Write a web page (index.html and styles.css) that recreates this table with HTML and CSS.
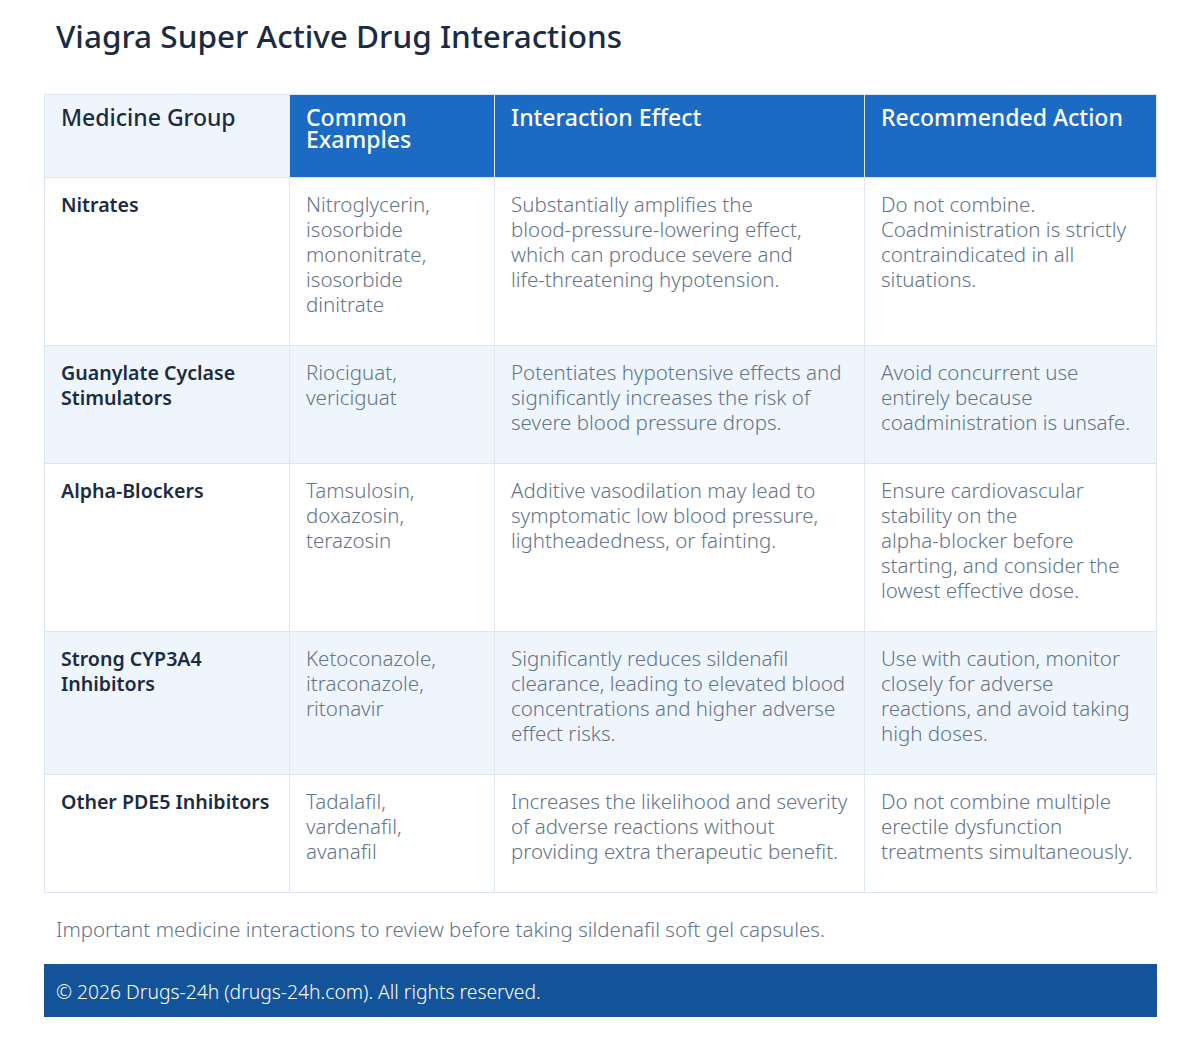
FILE: index.html
```html
<!DOCTYPE html>
<html lang="en">
<head>
<meta charset="utf-8">
<title>Viagra Super Active Drug Interactions</title>
<link rel="stylesheet" href="styles.css">
</head>
<body>
<main class="page">
  <h1 class="title">Viagra Super Active Drug Interactions</h1>
  <table class="grid">
    <colgroup>
      <col class="c1"><col class="c2"><col class="c3"><col class="c4">
    </colgroup>
    <thead>
      <tr>
        <th class="th-light">Medicine Group</th>
        <th>Common Examples</th>
        <th>Interaction Effect</th>
        <th>Recommended Action</th>
      </tr>
    </thead>
    <tbody>
      <tr>
        <td class="grp">Nitrates</td>
        <td class="ex">Nitroglycerin, isosorbide mononitrate, isosorbide dinitrate</td>
        <td>Substantially amplifies the <span class="nw">blood-pressure-lowering</span> effect, which can produce severe and <span class="nw">life-threatening</span> hypotension.</td>
        <td>Do not combine. Coadministration is strictly contraindicated in all situations.</td>
      </tr>
      <tr class="alt">
        <td class="grp">Guanylate Cyclase Stimulators</td>
        <td class="ex">Riociguat, vericiguat</td>
        <td>Potentiates hypotensive effects and significantly increases the risk of severe blood pressure drops.</td>
        <td>Avoid concurrent use entirely because coadministration is unsafe.</td>
      </tr>
      <tr>
        <td class="grp"><span class="nw">Alpha-Blockers</span></td>
        <td class="ex">Tamsulosin, doxazosin, terazosin</td>
        <td>Additive vasodilation may lead to symptomatic low blood pressure, lightheadedness, or fainting.</td>
        <td>Ensure cardiovascular stability on the <span class="nw">alpha-blocker</span> before starting, and consider the lowest effective dose.</td>
      </tr>
      <tr class="alt">
        <td class="grp">Strong CYP3A4 Inhibitors</td>
        <td class="ex">Ketoconazole, itraconazole, ritonavir</td>
        <td>Significantly reduces sildenafil clearance, leading to elevated blood concentrations and higher adverse effect risks.</td>
        <td>Use with caution, monitor closely for adverse reactions, and avoid taking high doses.</td>
      </tr>
      <tr>
        <td class="grp">Other PDE5 Inhibitors</td>
        <td class="ex">Tadalafil, vardenafil, avanafil</td>
        <td>Increases the likelihood and severity of adverse reactions without providing extra therapeutic benefit.</td>
        <td>Do not combine multiple erectile dysfunction treatments simultaneously.</td>
      </tr>
    </tbody>
  </table>
  <p class="caption">Important medicine interactions to review before taking sildenafil soft gel capsules.</p>
  <footer class="foot">© 2026 Drugs-24h (drugs-24h.com). All rights reserved.</footer>
</main>
</body>
</html>
```

FILE: styles.css
```css
html, body {
  margin: 0;
  padding: 0;
  background: #ffffff;
}
body {
  font-family: "Noto Sans", "Open Sans", sans-serif;
  color: #1b2b42;
}
.page {
  padding: 0 43px 0 44px;
}
.nw {
  white-space: nowrap;
}
.title {
  margin: 0;
  padding: 16px 12px 0;
  height: 94px;
  box-sizing: border-box;
  font-size: 31.5px;
  font-weight: 500;
  line-height: 40px;
  color: #1b2b42;
}
.grid {
  width: 100%;
  border-collapse: collapse;
  table-layout: fixed;
  border: 1px solid #dde7f2;
}
.c1 { width: 245px; }
.c2 { width: 205px; }
.c3 { width: 370px; }
.c4 { width: auto; }
.grid th {
  background: #1b6ac4;
  color: #ffffff;
  text-align: left;
  vertical-align: top;
  font-weight: 500;
  font-size: 23px;
  line-height: 22px;
  padding: 11px 16px 27px;
  border: 1px solid #dde7f2;
  height: 83px;
  box-sizing: border-box;
}
.grid th.th-light {
  background: #eef5fd;
  color: #1b2b42;
}
.grid td {
  vertical-align: top;
  text-align: left;
  font-size: 20.5px;
  font-weight: 300;
  line-height: 25px;
  color: #64748b;
  padding: 14px 16px 28px;
  border: 1px solid #dde7f2;
}
.grid td.ex {
  padding-right: 22px;
}
.grid td.grp {
  color: #1b2b42;
  font-weight: 600;
  font-size: 19.6px;
}
.grid tr.alt td {
  background: #eef5fd;
}
.caption {
  margin: 0;
  padding: 24px 12px 22px;
  font-size: 20.5px;
  font-weight: 300;
  line-height: 25px;
  color: #64748b;
}
.foot {
  background: #13539a;
  color: #ffffff;
  font-size: 19.3px;
  font-weight: 300;
  line-height: 25px;
  padding: 15px 12px 13px;
}
```
